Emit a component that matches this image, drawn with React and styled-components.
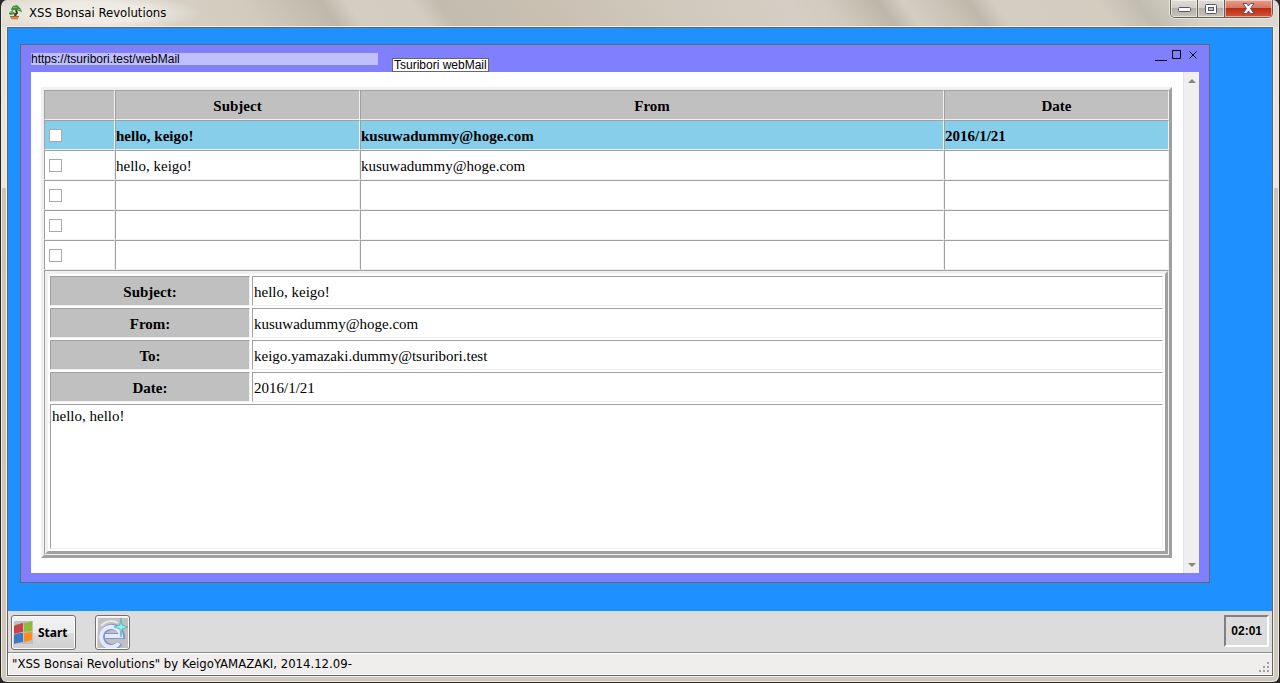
import React, {useState} from 'react';
import styled, {createGlobalStyle} from 'styled-components';

const uiFont = '"DejaVu Sans Condensed", "DejaVu Sans", "Noto Sans CJK JP", sans-serif';
const boldFont = '"Noto Sans", "Noto Sans CJK JP", sans-serif';
const gothic = '"Liberation Sans", "Noto Sans CJK JP", sans-serif';
const light = '#f0f0f0';
const dark = '#a0a0a0';

const mails = [
    {id: 1, subject: 'hello, keigo!', from: 'kusuwadummy@hoge.com', date: '2016/1/21'},
    {id: 2, subject: 'hello, keigo!', from: 'kusuwadummy@hoge.com', date: ''},
    {id: 3, subject: '', from: '', date: ''},
    {id: 4, subject: '', from: '', date: ''},
    {id: 5, subject: '', from: '', date: ''},
];

const details = [
    ['Subject:', 'hello, keigo!'],
    ['From:', 'kusuwadummy@hoge.com'],
    ['To:', 'keigo.yamazaki.dummy@tsuribori.test'],
    ['Date:', '2016/1/21'],
];

const GlobalStyle = createGlobalStyle`
  * {
    box-sizing: border-box;
  }

  body {
    margin: 0;
    background: #2a2626;
    color: #000;
  }

  button {
    margin: 0;
    padding: 0;
    color: inherit;
  }
`;

/* bonsai tree in the title bar */
const BonsaiIcon = () => (
    <svg width="14" height="16" viewBox="0 0 14 16" aria-hidden="true">
        <path d="M2 4 L4 1 L8 0 L10 2 L12 4 L13 7 L10 6 L8 5 L5 5 L3 6Z" fill="#3f8f3c"/>
        <path d="M0 8 L2 6 L5 7 L5 9 L2 10 L0 9Z" fill="#3f8f3c"/>
        <path d="M4 2h4v1h-4zM9 4h3v1h-3zM1 7h3v1h-3z" fill="#6fbd5c"/>
        <path d="M7 5 L8 8 L6 10 L7 12" fill="none" stroke="#4b3b2a" strokeWidth="2"/>
        <path d="M5 8 L7 9" stroke="#4b3b2a"/>
        <path d="M1 11h9l-1 3h-7z" fill="#d98843"/>
        <path d="M1 11h9v1h-9z" fill="#8f6b42"/>
        <path d="M3 14h6v1h-6z" fill="#efb98a"/>
    </svg>
);

/* four coloured panes of the start button */
const FlagIcon = () => (
    <svg width="19" height="23" viewBox="0 0 19 23" aria-hidden="true">
        <rect width="19" height="23" fill="#c0c0c0"/>
        <path d="M0 5 C3 3 6 3 9 2 V11 C6 11 3 12 0 13Z" fill="#c8414b"/>
        <path d="M10 2 C13 2 15 1 18 0 V10 C15 11 13 10 10 11Z" fill="#8dbb3a"/>
        <path d="M0 14 C3 12 6 12 9 12 V21 C6 21 3 22 0 23Z" fill="#3f78c4"/>
        <path d="M10 12 C13 12 15 11 18 11 V19 C15 20 13 20 10 21Z" fill="#ff8a1e"/>
    </svg>
);

const BrowserIcon = () => (
    <svg width="30" height="30" viewBox="0 0 30 30" aria-hidden="true">
        <rect width="30" height="30" fill="#c0c0c0"/>
        <path d="M3 8 C8 2 16 2 20 5" fill="none" stroke="#eaeaea" strokeWidth="2"/>
        <path d="M8 18 H24 A10 10 0 1 0 22 25" fill="none" stroke="#7d95d6" strokeWidth="6"/>
        <path d="M7 18 H23 A10 10 0 1 0 21 25" fill="none" stroke="#e4eafa" strokeWidth="4"/>
        <path d="M23 0 L24 7 L30 9 L24 11 L23 19 L22 11 L16 9 L22 7Z" fill="#8ff0ee" stroke="#4fa9b5" strokeWidth="0.7"/>
    </svg>
);

const App = () => {
    const [checked, setChecked] = useState([]);
    const toggle = (id) => {
        setChecked(checked.includes(id) ? checked.filter(v => v !== id) : [...checked, id]);
    };

    return (
        <Frame>
            <GlobalStyle/>
            <TitleBar>
                <BonsaiIcon/>
                <Title>XSS Bonsai Revolutions</Title>
                <CaptionButtons>
                    <CaptionButton aria-label="Minimize" $width="27px">
                        <svg width="13" height="6" viewBox="0 0 13 6">
                            <rect x="0.5" y="1.5" width="12" height="4" rx="1" fill="#fff" stroke="#50556b"/>
                        </svg>
                    </CaptionButton>
                    <CaptionButton aria-label="Maximize" $width="27px">
                        <svg width="12" height="10" viewBox="0 0 12 10">
                            <rect x="0.5" y="0.5" width="11" height="9" rx="1" fill="#fff" stroke="#50556b"/>
                            <rect x="3.5" y="3.5" width="5" height="3" fill="#c8c5c0" stroke="#50556b"/>
                        </svg>
                    </CaptionButton>
                    <CaptionButton aria-label="Close" $width="47px" $close>
                        <svg width="13" height="11" viewBox="0 0 13 11">
                            <path d="M1 0.5 H4.5 L6.5 3 L8.5 0.5 H12 L8.5 5.5 L12 10.5 H8.5 L6.5 8 L4.5 10.5 H1 L4.5 5.5Z" fill="#fff" stroke="#50556b"/>
                        </svg>
                    </CaptionButton>
                </CaptionButtons>
            </TitleBar>
            <Client>
                <Desktop>
                    <Window>
                        <WindowBar>
                            <UrlInput aria-label="URL" defaultValue="https://tsuribori.test/webMail"/>
                            <PageTitle>Tsuribori webMail</PageTitle>
                            <WindowButtons>
                                <WindowButton aria-label="Minimize window">
                                    <svg width="12" height="11" viewBox="0 0 12 11"><path d="M0 10.5h12" stroke="#000"/></svg>
                                </WindowButton>
                                <WindowButton aria-label="Maximize window">
                                    <svg width="9" height="9" viewBox="0 0 9 9"><path d="M0.5 0.5h8v8h-8z" fill="none" stroke="#000"/></svg>
                                </WindowButton>
                                <WindowButton aria-label="Close window">
                                    <svg width="11" height="9" viewBox="0 0 11 9"><path d="M3.5 1.5l7 7M10.5 1.5l-7 7" stroke="#000"/></svg>
                                </WindowButton>
                            </WindowButtons>
                        </WindowBar>
                        <Pane>
                            <Page>
                                <MailTable>
                                    <colgroup>
                                        <Col $width="71px"/>
                                        <Col $width="245px"/>
                                        <Col/>
                                        <Col $width="225px"/>
                                    </colgroup>
                                    <thead>
                                    <tr>
                                        <HeadCell/>
                                        <HeadCell scope="col">Subject</HeadCell>
                                        <HeadCell scope="col">From</HeadCell>
                                        <HeadCell scope="col">Date</HeadCell>
                                    </tr>
                                    </thead>
                                    <tbody>
                                    {mails.map(mail => (
                                        <MailRow key={mail.id} $selected={mail.id === 1}>
                                            <Cell>
                                                <CheckBox type="checkbox" aria-label={`mail ${mail.id}`}
                                                          checked={checked.includes(mail.id)}
                                                          onChange={() => toggle(mail.id)}/>
                                            </Cell>
                                            <TextCell>{mail.subject}</TextCell>
                                            <TextCell>{mail.from}</TextCell>
                                            <TextCell>{mail.date}</TextCell>
                                        </MailRow>
                                    ))}
                                    <tr>
                                        <Cell colSpan={4}>
                                            <DetailTable>
                                                <colgroup>
                                                    <Col $width="200px"/>
                                                    <Col/>
                                                </colgroup>
                                                <tbody>
                                                {details.map(([label, value]) => (
                                                    <tr key={label}>
                                                        <HeadCell scope="row">{label}</HeadCell>
                                                        <DetailCell>{value}</DetailCell>
                                                    </tr>
                                                ))}
                                                <tr>
                                                    <BodyCell colSpan={2}>hello, hello!</BodyCell>
                                                </tr>
                                                </tbody>
                                            </DetailTable>
                                        </Cell>
                                    </tr>
                                    </tbody>
                                </MailTable>
                            </Page>
                            <ScrollBar>
                                <ScrollButton aria-label="Scroll up">
                                    <svg width="8" height="4" viewBox="0 0 8 4"><path d="M4 0L8 4H0z" fill="#858585"/></svg>
                                </ScrollButton>
                                <ScrollButton aria-label="Scroll down">
                                    <svg width="8" height="4" viewBox="0 0 8 4"><path d="M0 0H8L4 4z" fill="#858585"/></svg>
                                </ScrollButton>
                            </ScrollBar>
                        </Pane>
                    </Window>
                </Desktop>
                <TaskBar>
                    <StartButton><FlagIcon/>Start</StartButton>
                    <BrowserButton aria-label="Browser"><BrowserIcon/></BrowserButton>
                    <Clock>02:01</Clock>
                </TaskBar>
                <StatusBar>
                    <span>"XSS Bonsai Revolutions" by KeigoYAMAZAKI, 2014.12.09-</span>
                    <Grip width="11" height="11" viewBox="0 0 11 11" aria-hidden="true">
                        <path d="M8 0h2v2h-2zM4 4h2v2h-2zM8 4h2v2h-2zM0 8h2v2h-2zM4 8h2v2h-2zM8 8h2v2h-2z" fill="#a5a0a0"/>
                    </Grip>
                </StatusBar>
            </Client>
        </Frame>
    );
}

const Frame = styled.div`
  display: flex;
  flex-direction: column;
  min-height: 100vh;
  padding: 0 6px 6px;
  border: 1px solid #2a2626;
  border-top: none;
  border-radius: 7px;
  box-shadow: inset 1px 0 #eeeae4, inset -1px -1px #eeeae4;
  background: linear-gradient(#e6e1d8, #ece8e1 188px, #cbc4b7 188px, #cfc8bc);
  font-family: ${uiFont};
  font-size: 13px;
`;

const TitleBar = styled.header`
  display: flex;
  align-items: flex-start;
  height: 27px;
  margin: 0 -5px;
  padding: 5px 5px 0 7px;
  gap: 6px;
  border-radius: 6px 6px 0 0;
  background:
    radial-gradient(ellipse 110px 20px at 90px 13px, rgba(240, 238, 232, 0.9) 50%, transparent),
    linear-gradient(54deg, #e0dbd0 0%, #d2cabd 20%, #bfb9ab 26%, #d4cdc2 28%, #d3ccc0 33%,
      #c3bcae 35%, #c8bfb1 42%, #d0c8bb 52%, #d6cec4 62%, #d2cabe 65%, #bdb7a9 69%,
      #d4cdc2 71%, #c9c2b5 74%, #bfb8aa 76%, #d4cdc2 78%, #d3ccbf 86%, #c0bdb0 89%, #d5d2c6 93%, #dedad0 100%);
`;

const Title = styled.span`
  line-height: 16px;
`;

const CaptionButtons = styled.div`
  display: flex;
  height: 18px;
  margin-top: -5px;
  margin-left: auto;
  border: 1px solid #625e58;
  border-top: none;
  border-radius: 0 0 5px 5px;
  overflow: hidden;
  box-shadow: 0 0 0 1px #e8e5de;
`;

const CaptionButton = styled.button`
  display: flex;
  align-items: center;
  justify-content: center;
  width: ${props => props.$width};
  border: none;
  border-right: ${props => props.$close ? 'none' : '1px solid #625e58'};
  box-shadow: inset 0 0 0 1px rgba(255, 255, 255, 0.5);
  background: ${props => props.$close
    ? 'linear-gradient(#e2a08c, #d9755f 45%, #bb2d12 50%, #d4533a)'
    : 'linear-gradient(#e0dcd6, #d2cec7 45%, #b4afa7 50%, #c9c5bd)'};
`;

const Client = styled.div`
  display: flex;
  flex: 1;
  flex-direction: column;
  border: 1px solid #666;
  box-shadow: 0 0 0 1px #f1eee9;
`;

const Desktop = styled.main`
  display: flex;
  flex: 1;
  padding: 16px 62px 28px 12px;
  background: #1e90ff;
`;

const Window = styled.section`
  display: flex;
  flex: 1;
  flex-direction: column;
  padding: 0 10px 9px;
  border: 1px solid #666;
  background: #8080ff;
`;

const WindowBar = styled.div`
  display: flex;
  align-items: flex-start;
  height: 27px;
  font-family: ${gothic};
`;

const UrlInput = styled.input`
  width: 347px;
  height: 12px;
  margin-top: 8px;
  padding: 0;
  border: none;
  outline: none;
  background: #c0c0ff;
  font-family: inherit;
  font-size: 12px;
  line-height: 12px;
`;

const PageTitle = styled.div`
  align-self: flex-end;
  margin-left: 14px;
  padding: 0 1px;
  border: 1px solid #666;
  background: #fff;
  font-size: 12px;
  line-height: 12px;
`;

const WindowButtons = styled.div`
  display: flex;
  gap: 5px;
  margin: 5px 2px 0 auto;
`;

const WindowButton = styled.button`
  display: flex;
  border: none;
  background: none;
`;

const Pane = styled.div`
  display: flex;
  flex: 1;
  background: #fff;
`;

const Page = styled.div`
  flex: 1;
  padding: 15px 11px 15px 10px;
`;

const ScrollBar = styled.div`
  display: flex;
  flex-direction: column;
  justify-content: space-between;
  width: 16px;
  border-left: 1px solid #e3e3e3;
  background: #efefef;
`;

const ScrollButton = styled.button`
  display: flex;
  align-items: center;
  justify-content: center;
  height: 17px;
  border: none;
  background: none;
`;

const Table = styled.table`
  width: 100%;
  table-layout: fixed;
  border: 3px solid;
  border-color: ${light} ${dark} ${dark} ${light};
  font-family: "Liberation Serif", "Noto Sans CJK JP", serif;
  font-size: 15px;
  line-height: 18px;
`;

const MailTable = styled(Table)`
  border-spacing: 0;
`;

const DetailTable = styled(Table)`
  border-spacing: 2px;
`;

const Col = styled.col`
  width: ${props => props.$width || 'auto'};
`;

const Cell = styled.td`
  height: 30px;
  padding: 0;
  border: 1px solid;
  border-color: ${dark} ${light} ${light} ${dark};
`;

const TextCell = styled(Cell)`
  padding-top: 2px;
`;

const HeadCell = styled(TextCell).attrs({as: 'th'})`
  background: #c0c0c0;
  font-weight: bold;
  text-align: center;
`;

const DetailCell = styled(TextCell)`
  padding-left: 1px;
`;

const BodyCell = styled(DetailCell)`
  height: 145px;
  vertical-align: top;
`;

const MailRow = styled.tr`
  background: ${props => props.$selected ? '#87ceeb' : '#fff'};
  font-weight: ${props => props.$selected ? 'bold' : 'normal'};
`;

const CheckBox = styled.input`
  display: block;
  appearance: none;
  width: 13px;
  height: 13px;
  margin: 0 0 0 4px;
  border: 1px solid #aaa;
  background: #fff;

  &:checked {
    background: #555;
    box-shadow: inset 0 0 0 2px #fff;
  }
`;

const TaskBar = styled.footer`
  display: flex;
  align-items: flex-start;
  height: 41px;
  padding: 4px 3px 0;
  background: #dcdcdc;
`;

const TaskButton = styled.button`
  display: flex;
  align-items: center;
  height: 35px;
  border: 1px solid #707070;
  border-radius: 3px;
  box-shadow: inset 0 0 0 1px #fcfcfc;
  background: linear-gradient(#f2f2f2, #ebebeb 50%, #dddddd 50%, #cfcfcf);
`;

const StartButton = styled(TaskButton)`
  width: 65px;
  gap: 5px;
  padding-left: 2px;
  font-family: ${boldFont};
  font-size: 12px;
  font-weight: bold;
`;

const BrowserButton = styled(TaskButton)`
  justify-content: center;
  width: 35px;
  margin-left: 19px;
`;

const Clock = styled.time`
  margin-left: auto;
  padding: 0 5px;
  border: 2px solid;
  border-color: #808080 #fff #fff #808080;
  font-family: ${gothic};
  font-size: 12px;
  font-weight: bold;
  line-height: 28px;
`;

const StatusBar = styled.div`
  display: flex;
  align-items: center;
  justify-content: space-between;
  height: 23px;
  padding-left: 4px;
  border-top: 1px solid #8a8a8a;
  box-shadow: inset 0 1px #fff, inset 1px -1px #fff;
  background: #f0eded;
  line-height: 16px;
`;

const Grip = styled.svg`
  align-self: flex-end;
  margin: 0 2px 2px 0;
`;

export default App;
